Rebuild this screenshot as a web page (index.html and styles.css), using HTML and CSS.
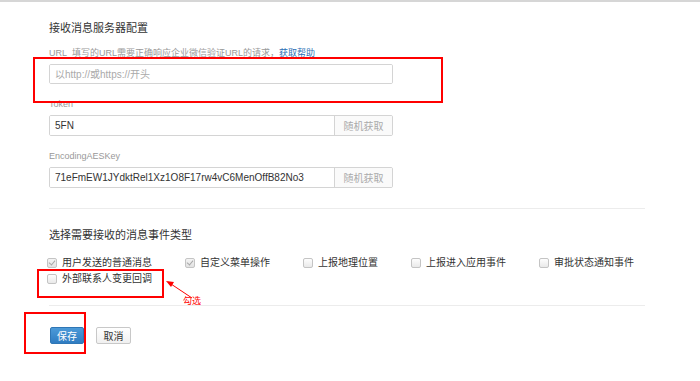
FILE: index.html
```html
<!DOCTYPE html>
<html lang="zh-CN">
<head>
    <meta charset="UTF-8">
    <meta name="viewport" content="width=device-width, initial-scale=1.0">
    <title>接收消息服务器配置</title>
    <link rel="stylesheet" href="styles.css">
</head>
<body>

<div class="page">
    <h3 class="section-title">接收消息服务器配置</h3>

    <div class="field-desc">URL&nbsp;&nbsp;填写的URL需要正确响应企业微信验证URL的请求，<a href="#" class="help-link">获取帮助</a></div>
    <div class="input-group url-group">
        <input type="text" class="text-input" placeholder="以http://或https://开头">
    </div>

    <div class="field-label">Token</div>
    <div class="input-group">
        <input type="text" class="text-input" value="5FN">
        <span class="addon">随机获取</span>
    </div>

    <div class="field-label">EncodingAESKey</div>
    <div class="input-group">
        <input type="text" class="text-input" value="71eFmEW1JYdktRel1Xz1O8F17rw4vC6MenOffB82No3">
        <span class="addon">随机获取</span>
    </div>

    <div class="divider first-divider"></div>

    <h3 class="section-title events-title">选择需要接收的消息事件类型</h3>

    <div class="event-list">
        <label class="event-item"><span class="check checked"></span>用户发送的普通消息</label>
        <label class="event-item"><span class="check checked"></span>自定义菜单操作</label>
        <label class="event-item"><span class="check"></span>上报地理位置</label>
        <label class="event-item"><span class="check"></span>上报进入应用事件</label>
        <label class="event-item"><span class="check"></span>审批状态通知事件</label>
        <label class="event-item"><span class="check"></span>外部联系人变更回调</label>
    </div>

    <div class="divider second-divider"></div>

    <div class="actions">
        <button class="btn btn-primary">保存</button>
        <button class="btn btn-default">取消</button>
    </div>

    <!-- annotations drawn on top of the screenshot -->
    <div class="mark mark-url"></div>
    <div class="mark mark-event"></div>
    <div class="mark mark-save"></div>
    <svg class="mark-arrow" width="40" height="24" viewBox="0 0 40 24">
        <line x1="30" y1="21" x2="6" y2="5" stroke="#f00" stroke-width="1"/>
        <polygon points="4,4 12,5 9,10" fill="#f00"/>
    </svg>
    <span class="mark-note">勾选</span>
</div>

</body>
</html>
```

FILE: styles.css
```css
/* Global Styles */
body {
    margin: 0;
    padding: 0;
    background: #fff;
    font-family: 'Liberation Sans', 'Noto Sans CJK SC', sans-serif;
    color: #333;
}

.page {
    position: relative;
    width: 700px;
    height: 379px;
    border-top: 2px solid #d6d6d6;
    padding-left: 49px;
    box-sizing: border-box;
    overflow: hidden;
}

.section-title {
    margin: 18px 0 0;
    font-size: 11px;
    line-height: 16px;
    font-weight: normal;
    color: #333;
}

.field-desc,
.field-label {
    font-size: 9px;
    line-height: 12px;
    color: #999;
}

.field-desc {
    margin-top: 11px;
}

.help-link {
    color: #2b6fb6;
    text-decoration: none;
}

.field-label {
    margin-top: 14px;
}

.input-group {
    display: flex;
    width: 344px;
    height: 21px;
    margin-top: 5px;
    border: 1px solid #d4d4d4;
    border-radius: 2px;
    box-sizing: border-box;
    overflow: hidden;
}

.url-group {
    height: 20px;
}

.text-input {
    flex: 1;
    min-width: 0;
    border: none;
    outline: none;
    padding: 0 5px;
    font-family: inherit;
    font-size: 10px;
    color: #333;
    background: #fff;
}

.text-input::placeholder {
    color: #aaa;
}

.addon {
    width: 57px;
    border-left: 1px solid #d4d4d4;
    background: #fafafa;
    color: #aaa;
    font-size: 10px;
    display: flex;
    align-items: center;
    justify-content: center;
}

.divider {
    width: 596px;
    border-top: 1px solid #ececec;
}

.first-divider {
    margin-top: 20px;
}

.events-title {
    margin-top: 18px;
}

.event-list {
    display: flex;
    flex-wrap: wrap;
    column-gap: 33px;
    width: 600px;
    margin-top: 12px;
    margin-left: -2px;
}

.event-item {
    display: flex;
    align-items: center;
    gap: 5px;
    font-size: 10px;
    line-height: 16px;
    color: #333;
}

.check {
    position: relative;
    width: 10px;
    height: 10px;
    border: 1px solid #c4c4c4;
    border-radius: 2px;
    background: linear-gradient(#fdfdfd, #e9e9e9);
    box-sizing: border-box;
}

.check.checked {
    background: linear-gradient(#f4f4f4, #e2e2e2);
}

.check.checked::after {
    content: "";
    position: absolute;
    left: 2px;
    top: 0;
    width: 3px;
    height: 5px;
    border-right: 1.5px solid #a8a8a8;
    border-bottom: 1.5px solid #a8a8a8;
    transform: rotate(40deg);
}

.second-divider {
    margin-top: 18px;
}

.actions {
    display: flex;
    gap: 12px;
    margin-top: 21px;
    padding-left: 1px;
}

.btn {
    height: 17px;
    padding: 0;
    font-family: inherit;
    font-size: 10px;
    border-radius: 2px;
    cursor: pointer;
}

.btn-primary {
    width: 34px;
    border: 1px solid #2f76b5;
    background: linear-gradient(#4c9ad8, #2f7cc2);
    color: #fff;
}

.btn-default {
    width: 35px;
    border: 1px solid #c8c8c8;
    background: linear-gradient(#fff, #f0f0f0);
    color: #333;
}

/* Annotations */
.mark {
    position: absolute;
    border: 2px solid #f00;
    box-sizing: border-box;
}

.mark-url {
    left: 33px;
    top: 55px;
    width: 410px;
    height: 46px;
}

.mark-event {
    left: 37px;
    top: 267px;
    width: 127px;
    height: 29px;
}

.mark-save {
    left: 24px;
    top: 310px;
    width: 62px;
    height: 42px;
}

.mark-arrow {
    position: absolute;
    left: 162px;
    top: 275px;
}

.mark-note {
    position: absolute;
    left: 183px;
    top: 292px;
    font-size: 9px;
    line-height: 14px;
    color: #f00;
}
```
